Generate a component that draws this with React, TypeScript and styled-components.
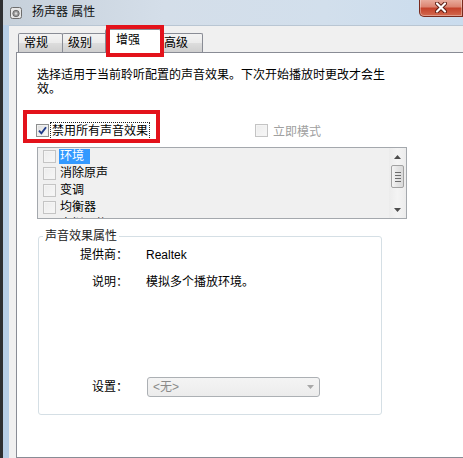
import styled, { createGlobalStyle } from 'styled-components'

/* ───── global ───── */

const Global = createGlobalStyle`
  html, body { margin:0; padding:0; background:#fff; }
  body {
    font-family: "Liberation Sans", "Noto Sans CJK SC", sans-serif;
    font-size:12px; color:#000;
  }
  * { box-sizing:border-box; }
`

/* ───── window frame ───── */

const Window = styled.div`
  position:relative; width:463px; height:458px; overflow:hidden;
  display:flex; flex-direction:column;
  border-left:3px solid #2e2f31;
  background:linear-gradient(90deg,#c6d0da 0%,#d4dee9 35%,#d2dfec 70%,#cadcee 100%);
`

const TitleBar = styled.div`
  height:25px; flex:none;
  display:flex; align-items:center; gap:10px;
  padding-left:7px;
`

const TitleText = styled.span`
  font-size:12px; line-height:14px; color:#111;
  margin-top:-1px;
`

const CloseBtn = styled.div`
  align-self:flex-start; margin-left:auto;
  width:44px; height:18px; margin-top:-1px;
  display:flex; align-items:center; justify-content:center;
  border:1px solid #7a2a1d; border-top:none;
  border-radius:0 0 0 5px;
  background:linear-gradient(#eab0a2 0%,#dc8572 45%,#c4432c 55%,#d36a4f 100%);
  box-shadow:inset 0 0 0 1px rgba(255,255,255,.35);
`

const Body = styled.div`
  flex:1; display:flex;
  border-left:6px solid #b7cee6;
`

const Content = styled.div`
  flex:1; display:flex; flex-direction:column;
  background:#f0f0f0;
  border-top:1px solid #b9c6d3;
  padding:7px 7px 0 7px;
`

/* ───── tabs ───── */

const TabStrip = styled.div`
  height:19px; flex:none;
  display:flex; align-items:flex-end;
  padding-left:2px;
  position:relative; z-index:1;
`

const Tab = styled.div<{ $active?: boolean }>`
  height:${p => (p.$active ? '24px' : '19px')};
  margin:${p => (p.$active ? '0 -2px -1px -2px' : '0 0 0 -1px')};
  padding:${p => (p.$active ? '0 20px 0 10px' : '0 14px 0 5px')};
  line-height:${p => (p.$active ? '20px' : '18px')};
  border:1px solid #898c95; border-bottom:none;
  border-radius:2px 2px 0 0;
  background:${p => (p.$active
    ? '#fff'
    : 'linear-gradient(#f3f3f3 0%,#ebebeb 50%,#dddddd 51%,#cfcfcf 100%)')};
  position:relative; z-index:${p => (p.$active ? 2 : 1)};
  &:first-child{ margin-left:0; }
`

const Panel = styled.div`
  flex:1; background:#fff;
  border:1px solid #898c95;
  padding:15px 73px 0 20px;
  display:flex; flex-direction:column;
`

/* ───── panel content ───── */

const Desc = styled.p`
  margin:0; width:370px;
  line-height:14px;
`

const CheckRow = styled.div`
  margin-top:26px; height:16px;
  display:grid; grid-template-columns:219px auto;
  align-items:center;
`

const CheckItem = styled.label<{ $disabled?: boolean }>`
  display:flex; align-items:center; gap:2px;
  color:${p => (p.$disabled ? '#a0a0a0' : '#000')};
  margin-left:-1px;
`

const FocusText = styled.span`
  outline:1px dotted #222; outline-offset:0;
  padding:0 1px; line-height:16px;
`

const Box = styled.span<{ $disabled?: boolean }>`
  width:13px; height:13px; flex:none;
  display:inline-flex; align-items:center; justify-content:center;
  border:1px solid ${p => (p.$disabled ? '#c4c4c4' : '#8e8f8f')};
  background:${p => (p.$disabled
    ? 'linear-gradient(135deg,#ececec,#f7f7f7)'
    : 'linear-gradient(135deg,#dcdcdc,#fdfdfd)')};
  box-shadow:inset 0 0 0 1px ${p => (p.$disabled ? '#f4f4f4' : '#f0f0f0')};
`

const DisabledText = styled.span`
  margin-left:3px;
`

/* list box */

const ListBox = styled.div`
  margin-top:9px; height:72px;
  display:flex;
  border:1px solid #a4a8ad;
  background:#f0f0f0;
`

const Items = styled.div`
  flex:1; overflow:hidden;
  padding-left:5px;
`

const Item = styled.div`
  height:17px; display:flex; align-items:center; gap:3px;
`

const ItemLabel = styled.span<{ $selected?: boolean }>`
  line-height:15px;
  padding:${p => (p.$selected ? '0 6px 0 1px' : '0 1px')};
  background:${p => (p.$selected ? '#3399ff' : 'transparent')};
  color:${p => (p.$selected ? '#fff' : '#000')};
`

const ScrollBar = styled.div`
  width:17px; flex:none;
  display:flex; flex-direction:column; align-items:center;
  background:linear-gradient(90deg,#ececec,#f4f4f4 50%,#ececec);
`

const Arrow = styled.div`
  height:17px; width:100%;
  display:flex; align-items:center; justify-content:center;
`

const Thumb = styled.div`
  width:13px; height:23px;
  display:flex; flex-direction:column; align-items:center; justify-content:center; gap:2px;
  border:1px solid #a2a2a2; border-radius:2px;
  background:linear-gradient(90deg,#f4f4f4,#e4e4e4 50%,#dadada);
  span{ width:6px; height:1px; background:#6c6c6c; }
`

const Spacer = styled.div`flex:1;`

/* group box */

const Group = styled.fieldset`
  margin:9px 0 0 1px; padding:0;
  width:344px;
  border:1px solid #d5dfe5; border-radius:3px;
`

const Legend = styled.legend`
  margin-left:4px; padding:0 2px;
  line-height:16px; color:#222;
`

const GroupInner = styled.div`
  height:170px;
  display:flex; flex-direction:column;
  padding:3px 0 17px 0;
`

const PropRow = styled.div<{ $gap?: number; $push?: boolean }>`
  display:grid; grid-template-columns:89px 1fr; column-gap:18px;
  align-items:center; line-height:16px;
  margin-top:${p => (p.$push ? 'auto' : `${p.$gap ?? 0}px`)};
`

const PropKey = styled.span`
  text-align:right;
`

const Combo = styled.div`
  width:173px; height:20px; margin-left:1px;
  display:flex; align-items:center; justify-content:space-between;
  padding:0 5px 0 5px;
  border:1px solid #acb0b4; border-radius:3px;
  background:linear-gradient(#f4f4f4,#ececec);
  color:#8a8a8a;
`

/* annotation boxes */

const Mark = styled.div`
  position:absolute; border:4px solid #e3121b; pointer-events:none; z-index:5;
`

/* ───── data ───── */

// 列表只显示前几项，第 5 项被底边裁掉
const effects = ['环境', '消除原声', '变调', '均衡器', '虚拟环绕']

export default function App() {
  return (
    <>
      <Global />
      <Window>
        <TitleBar>
          <svg width="12" height="12" viewBox="0 0 12 12">
            <rect x="0.5" y="0.5" width="11" height="11" rx="2" fill="#e6e6e6" stroke="#6d6d6d" />
            <circle cx="6" cy="6.5" r="3.2" fill="#9a9a9a" stroke="#5c5c5c" strokeWidth="0.8" />
            <circle cx="6" cy="6.5" r="1.2" fill="#dcdcdc" />
          </svg>
          <TitleText>扬声器 属性</TitleText>
          <CloseBtn>
            <svg width="12" height="11" viewBox="0 0 12 11">
              <path d="M2 1.5 L10 9.5 M10 1.5 L2 9.5" stroke="#5a1a10" strokeWidth="4" strokeLinecap="round" />
              <path d="M2 1.5 L10 9.5 M10 1.5 L2 9.5" stroke="#fff" strokeWidth="2.2" strokeLinecap="round" />
            </svg>
          </CloseBtn>
        </TitleBar>

        <Body>
          <Content>
            <TabStrip>
              <Tab>常规</Tab>
              <Tab>级别</Tab>
              <Tab $active>增强</Tab>
              <Tab>高级</Tab>
            </TabStrip>

            <Panel>
              <Desc>选择适用于当前聆听配置的声音效果。下次开始播放时更改才会生效。</Desc>

              <CheckRow>
                <CheckItem>
                  <Box>
                    <svg width="9" height="9" viewBox="0 0 9 9">
                      <path d="M1 4.6 L3.4 7.3 L8 1.2" fill="none" stroke="#1f3a8a" strokeWidth="1.9" />
                    </svg>
                  </Box>
                  <FocusText>禁用所有声音效果</FocusText>
                </CheckItem>
                <CheckItem $disabled>
                  <Box $disabled />
                  <DisabledText>立即模式</DisabledText>
                </CheckItem>
              </CheckRow>

              <ListBox>
                <Items>
                  {effects.map((e, i) => (
                    <Item key={e}>
                      <Box $disabled />
                      <ItemLabel $selected={i === 0}>{e}</ItemLabel>
                    </Item>
                  ))}
                </Items>
                <ScrollBar>
                  <Arrow>
                    <svg width="7" height="4" viewBox="0 0 7 4"><path d="M0 4 L3.5 0 L7 4 Z" fill="#4d4d4d" /></svg>
                  </Arrow>
                  <Thumb><span /><span /><span /><span /></Thumb>
                  <Spacer />
                  <Arrow>
                    <svg width="7" height="4" viewBox="0 0 7 4"><path d="M0 0 L7 0 L3.5 4 Z" fill="#4d4d4d" /></svg>
                  </Arrow>
                </ScrollBar>
              </ListBox>

              <Group>
                <Legend>声音效果属性</Legend>
                <GroupInner>
                  <PropRow>
                    <PropKey>提供商：</PropKey>
                    <span>Realtek</span>
                  </PropRow>
                  <PropRow $gap={11}>
                    <PropKey>说明：</PropKey>
                    <span>模拟多个播放环境。</span>
                  </PropRow>
                  <PropRow $push>
                    <PropKey>设置：</PropKey>
                    <Combo>
                      <span>&lt;无&gt;</span>
                      <svg width="7" height="4" viewBox="0 0 7 4"><path d="M0 0 L7 0 L3.5 4 Z" fill="#a8a8a8" /></svg>
                    </Combo>
                  </PropRow>
                </GroupInner>
              </Group>
            </Panel>
          </Content>
        </Body>

        <Mark style={{ left: 103, top: 25, width: 58, height: 32 }} />
        <Mark style={{ left: 20, top: 110, width: 137, height: 33 }} />
      </Window>
    </>
  )
}
